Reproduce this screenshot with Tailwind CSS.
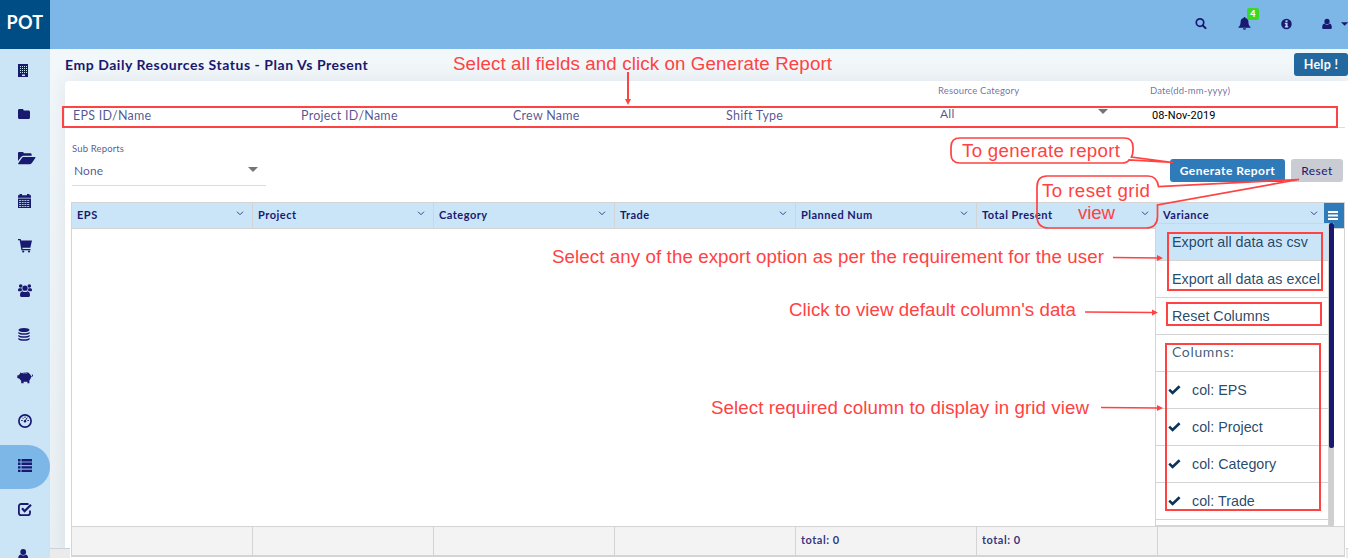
<!DOCTYPE html>
<html lang="en">
<head>
<meta charset="utf-8">
<title>Emp Daily Resources Status</title>
<script src="https://cdn.jsdelivr.net/npm/@tailwindcss/browser@4"></script>
</head>
<body class="w-[1348px] h-[558px] overflow-hidden relative font-['Lato',sans-serif] text-[#191970] bg-white">
<header class="h-[49px] flex bg-[#7cb7e8]">
  <div class="w-[50px] h-[49px] bg-[#004c84] text-white font-bold text-[18px] leading-[45px] text-center tracking-[0.3px]">POT</div>
  <div class="flex-1"></div>
  <div class="flex items-center w-[153px] h-[47px]">
    <svg class="w-[13px] h-[13px]" viewBox="0 0 13 13" fill="none" stroke="#191970"><circle cx="5.5" cy="5.5" r="4.1" stroke-width="1.9"/><path d="M8.6 8.6l3 3" stroke-width="2.3" stroke-linecap="round"/></svg>
    <div class="relative ml-[31px] w-[13px] h-[13px]">
      <svg class="w-[13px] h-[13px]" viewBox="0 0 13 13" fill="#191970"><path d="M6.5 0c.6 0 .9.4.9.9C9.400 1.300 10.400 2.800 10.400 4.700c0 3 .9 4.300 2.100 5.300v.8H.5V10C1.700 9 2.600 7.700 2.600 4.700c0-1.900 1-3.400 3-3.800 0-.5.300-.9.900-.9zM5 11.300h3a1.500 1.500 0 0 1-3 0z"/></svg>
      <span class="absolute -top-[9px] left-[9px] w-[12px] h-[12px] rounded-[2px] bg-[#39d925] text-white text-[9px] leading-[11px] font-black text-center">4</span>
    </div>
    <svg class="ml-[30px] w-[12px] h-[12px]" viewBox="0 0 12 12"><circle cx="6" cy="6" r="5.800" fill="#191970"/><path d="M5 2h2.200v1.700H5zM4.200 4.700h3v3.800h.8v1.300H4.200V8.500H5V6h-.8z" fill="#b5d5f0"/></svg>
    <svg class="ml-[30px] w-[11px] h-[12px]" viewBox="0 0 11 12" fill="#191970"><circle cx="5.500" cy="3.200" r="2.900"/><path d="M2.600 5.400C.8 5.800.2 7.800.2 9.800c0 1.200.7 1.800 1.700 1.800h7.200c1 0 1.700-.6 1.700-1.800 0-2-.6-4-2.400-4.400a4.100 4.100 0 0 1-5.800 0z"/></svg>
    <svg class="ml-[9px] w-[8px] h-[4px]" viewBox="0 0 8 4" fill="#191970"><path d="M0 0h8L4 4z"/></svg>
  </div>
</header>
<div class="flex h-[509px]">
  <nav class="w-[50px] bg-[#cbe5f7] overflow-hidden flex flex-col">
    <div class="h-[44px] shrink-0 flex items-center pl-[18px]"><svg class="w-[16px] h-[16px]" viewBox="0 0 16 16"><path fill="#191970" d="M0 1h10v13H0z"/><path d="M2 3.500h7M2 5.500h7M2 7.500h7M2 9.500h7" stroke="#cbe5f7" stroke-width="1" stroke-dasharray="1 1"/><path d="M4 11.500h3v1.500H4z" fill="#cbe5f7"/></svg></div>
    <div class="h-[44px] shrink-0 flex items-center pl-[18px]"><svg class="w-[16px] h-[16px]" viewBox="0 0 16 16" fill="#191970"><path d="M1.500 2h2.800c.8 0 1.400.6 1.400 1.500h4.800c.9 0 1.500.6 1.500 1.500v5.500c0 .9-.6 1.500-1.500 1.500h-9C.6 12 0 11.400 0 10.500v-7C0 2.600.6 2 1.500 2z"/></svg></div>
    <div class="h-[44px] shrink-0 flex items-center pl-[18px] pb-[1px]"><svg class="w-[18px] h-[16px]" viewBox="0 0 18 16" fill="#191970"><path d="M1.300 1h3.200c.8 0 1.300.6 1.300 1.300h6.400c1 0 1.500.6 1.500 1.500v1H6c-1.400 0-2.600.6-3.400 1.700L0 10V2.300C0 1.500.5 1 1.300 1z"/><path d="M5.600 6h11.200c.8 0 .9.500.5 1.100l-3.400 5c-.5.700-1.200 1.100-2 1.100H.7c-.6 0-.8-.4-.4-1l3.400-5C4.200 6.400 4.800 6 5.600 6z"/></svg></div>
    <div class="h-[44px] shrink-0 flex items-center pl-[18px] pb-[4px]"><svg class="w-[16px] h-[16px]" viewBox="0 0 16 16"><path fill="#191970" d="M0 2.200h1.500V1h2.500v1.200h5V1h2.500v1.200H13v2.500H0zM0 5.500h13V15H0z"/><path d="M1 7.500h11M1 9.500h11M1 11.500h11M1 13.500h11" stroke="#cbe5f7" stroke-dasharray="2 .7" stroke-width=".8"/></svg></div>
    <div class="h-[44px] shrink-0 flex items-center pl-[18px] pb-[3px]"><svg class="w-[16px] h-[16px]" viewBox="0 0 16 16" fill="#191970"><path d="M0 1h2.600l.5 1.600H14L12.300 9.800H4.300l.2 1.200h8v1.200H3.400L1.700 2.200H0z"/><circle cx="5.200" cy="13.500" r="1.100"/><circle cx="11" cy="13.500" r="1.100"/></svg></div>
    <div class="h-[44px] shrink-0 flex items-center pl-[18px]"><svg class="w-[16px] h-[16px]" viewBox="0 0 16 16" fill="#191970"><circle cx="2.700" cy="3" r="1.800"/><circle cx="11.300" cy="3" r="1.800"/><circle cx="7" cy="5.200" r="2.600"/><path d="M1.300 5.200h2.200c.1 1 .5 1.700 1 2.200-.9.100-1.500.4-2 .9H1.200C.4 8.300 0 7.800 0 7.200c0-1 .3-2 1.300-2zM12.700 5.200h-2.200c-.1 1-.5 1.700-1 2.200.9.100 1.500.4 2 .9h1.300c.8 0 1.200-.5 1.200-1.100 0-1-.3-2-1.300-2zM4.500 8.200c1.600 1.200 3.400 1.200 5 0 1.800.1 2.500 2 2.500 4 0 1.200-.7 1.800-1.700 1.800H3.700c-1 0-1.700-.6-1.700-1.800 0-2 .7-3.900 2.500-4z"/></svg></div>
    <div class="h-[44px] shrink-0 flex items-center pl-[18px]"><svg class="w-[16px] h-[16px]" viewBox="0 0 16 16" fill="#191970"><ellipse cx="6" cy="3" rx="5.500" ry="2"/><path d="M.3 4.900c2.400 1.700 9 1.700 11.400 0v1.300c-1.400 2-10 2-11.400 0zM.3 7.900c2.400 1.700 9 1.700 11.400 0v1.300c-1.400 2-10 2-11.400 0zM.3 10.900c2.400 1.700 9 1.700 11.400 0v1.300c-1.400 2-10 2-11.400 0z"/></svg></div>
    <div class="h-[44px] shrink-0 flex items-center pl-[17px] pb-[3px]"><svg class="w-[17px] h-[16px]" viewBox="0 0 17 16"><path fill="#191970" d="M3 2.500l2 .7c2-1.200 5.500-1.200 7.300.2 1.200 1 1.700 2 1.800 3 .6.100 1-.2 1-.7-.6-.5-.2-1.400.5-1.200.5.300.5 1.400-.1 2-.4.600-.8.800-1.500.8-.2 1.300-.8 2.200-1.600 3v3H10.400v-1.500H6.600v1.500H4.200v-2.500C3.400 10.300 2.800 9.600 2.500 8.800L.3 8V5.500L2 5c.3-.5.600-.9 1.100-1.300z"/><path d="M6 3.200c1.200-.5 2.700-.5 4 0" stroke="#cbe5f7" stroke-width=".7" fill="none"/></svg></div>
    <div class="h-[44px] shrink-0 flex items-center pl-[18px] pb-[4px]"><svg class="w-[16px] h-[16px]" viewBox="0 0 16 16"><circle cx="7" cy="8" r="6.100" fill="none" stroke="#191970" stroke-width="1.700"/><path d="M3.200 7.500h1.500M9.400 7.500h1.500M4.300 4.700l1 1M7 3.500v1.500" stroke="#191970"/><path d="M7 8.200l2.200-3.500" stroke="#191970" stroke-width="1"/><circle cx="7" cy="8.200" r="1.200" fill="#191970"/></svg></div>
    <div class="h-[44px] shrink-0 flex items-center pl-[18px] pb-[2px] bg-[#7cb7e8] rounded-r-full"><svg class="w-[16px] h-[16px]" viewBox="0 0 16 16" fill="#191970"><path d="M0 1h2.500v2.500H0zM3.500 1H14v2.500H3.500zM0 4.600h2.500V7H0zM3.500 4.600H14V7H3.500zM0 8.200h2.500v2.400H0zM3.500 8.200H14v2.400H3.500zM0 11.700h2.500V14H0zM3.500 11.700H14V14H3.500z"/></svg></div>
    <div class="h-[44px] shrink-0 flex items-center pl-[18px] pb-[2px]"><svg class="w-[16px] h-[16px]" viewBox="0 0 16 16" fill="none" stroke="#191970"><path d="M10.500 2H3.200C1.800 2 .9 2.900.9 4.200v6.700c0 1.300.9 2.200 2.300 2.200h6.500c1.400 0 2.300-.9 2.300-2.200V8.500" stroke-width="1.800"/><path d="M4 6.300l2.600 2.800L13 2.700" stroke-width="2.200"/></svg></div>
    <div class="h-[44px] shrink-0 flex items-center pl-[18px]"><svg class="w-[11px] h-[12px]" viewBox="0 0 11 12" fill="#191970"><circle cx="5.200" cy="3" r="2.900"/><path d="M2.600 5.400C.8 5.800.2 7.800.2 9.800c0 1.200.7 1.800 1.700 1.800h6.600c1 0 1.700-.6 1.700-1.800 0-2-.6-4-2.400-4.400a4.100 4.100 0 0 1-5.200 0z"/></svg></div>
  </nav>
  <main class="flex-1 min-w-0 flex flex-col bg-gradient-to-b from-[#f2f7fa] to-[#eaf0f4]">
    <div class="h-[32px] shrink-0 flex items-center justify-between pl-[15px]">
      <h1 class="font-bold text-[14px] tracking-[0.540px] pb-[2px]">Emp Daily Resources Status - Plan Vs Present</h1>
      <button class="w-[54px] h-[23px] rounded-[3px] bg-[#2369a0] text-white font-bold text-[12.500px] tracking-[0.3px] leading-[21px] mb-[1px]">Help !</button>
    </div>
    <section class="ml-[15px] h-[477px] rounded-tl-[4px] bg-white shadow-[0_0_20px_rgba(60,80,90,0.10)] pl-[6px] pr-[3px] flex flex-col">
      <div class="h-[47px] shrink-0 flex text-[12.500px] leading-[19px] tracking-[0.25px] text-[#191970]/75">
        <div class="w-[228px] border-b border-[#ddd] pt-[25px] pl-[2px]">EPS ID/Name</div>
        <div class="w-[212px] border-b border-[#ddd] pt-[25px] pl-[2px]">Project ID/Name</div>
        <div class="w-[213px] border-b border-[#ddd] pt-[25px] pl-[2px]">Crew Name</div>
        <div class="w-[213px] border-b border-[#ddd] pt-[25px] pl-[2px]">Shift Type</div>
        <div class="w-[213px] border-b border-[#ddd] pl-[1px] flex flex-col">
          <span class="text-[9.500px] leading-[12px] tracking-[0.150px] mt-[4px] text-[#191970]/65">Resource Category</span>
          <div class="flex justify-between items-center pl-[2px] pr-[42px] mt-[7px]"><span class="text-[12px] leading-[19px]">All</span><svg class="w-[10px] h-[5px] mb-[4px]" viewBox="0 0 10 5"><path d="M0 0h10L5 5z" fill="#757575"/></svg></div>
        </div>
        <div class="flex-1 border-b border-[#ddd] flex flex-col">
          <span class="text-[9.500px] leading-[12px] tracking-[0.150px] mt-[4px] text-[#191970]/65">Date(dd-mm-yyyy)</span>
          <span class="font-['Roboto',sans-serif] text-[11px] tracking-[0.1px] leading-[14px] text-black pl-[2px] mt-[12px]">08-Nov-2019</span>
        </div>
      </div>
      <div class="h-[74px] shrink-0 flex justify-between">
        <div class="w-[194px] h-[58px] border-b border-[#ddd] ml-[1px] pt-[15px] text-[#191970]/75">
          <div class="text-[9.500px] leading-[12px] tracking-[0.150px] text-[#191970]/75">Sub Reports</div>
          <div class="flex justify-between items-center pl-[2px] pr-[8px] mt-[7px]"><span class="text-[12px] leading-[18px] tracking-[0.1px]">None</span><svg class="w-[10px] h-[5px] mb-[4px]" viewBox="0 0 10 5"><path d="M0 0h10L5 5z" fill="#757575"/></svg></div>
        </div>
        <div class="flex gap-[6px] pt-[31px] pr-[2px] text-[12px] tracking-[0.450px]">
          <button class="w-[115px] h-[23px] rounded-[3px] bg-[#2f7ab8] text-white font-bold">Generate Report</button>
          <button class="w-[52px] h-[23px] rounded-[3px] bg-[#c9cdd3]">Reset</button>
        </div>
      </div>
      <div class="h-[355px] shrink-0 relative border border-b-2 border-[#d4d4d4] flex flex-col bg-white">
        <div class="h-[26px] shrink-0 flex bg-[#cbe5f8] border-b border-[#d4d4d4] font-bold text-[11px] leading-[24px] tracking-[0.5px]">
          <div class="w-[181px] border-r border-[#d4d4d4] pl-[5px] pr-[8px] flex justify-between"><span>EPS</span><svg class="w-[8px] h-[5px] mt-[8px]" viewBox="0 0 8 5" fill="none" stroke="#3d3d8f"><path d="M1 .7l3 3 3-3"/></svg></div>
          <div class="w-[181px] border-r border-[#d4d4d4] pl-[5px] pr-[8px] flex justify-between"><span>Project</span><svg class="w-[8px] h-[5px] mt-[8px]" viewBox="0 0 8 5" fill="none" stroke="#3d3d8f"><path d="M1 .7l3 3 3-3"/></svg></div>
          <div class="w-[181px] border-r border-[#d4d4d4] pl-[5px] pr-[8px] flex justify-between"><span>Category</span><svg class="w-[8px] h-[5px] mt-[8px]" viewBox="0 0 8 5" fill="none" stroke="#3d3d8f"><path d="M1 .7l3 3 3-3"/></svg></div>
          <div class="w-[181px] border-r border-[#d4d4d4] pl-[5px] pr-[8px] flex justify-between"><span>Trade</span><svg class="w-[8px] h-[5px] mt-[8px]" viewBox="0 0 8 5" fill="none" stroke="#3d3d8f"><path d="M1 .7l3 3 3-3"/></svg></div>
          <div class="w-[181px] border-r border-[#d4d4d4] pl-[5px] pr-[8px] flex justify-between"><span>Planned Num</span><svg class="w-[8px] h-[5px] mt-[8px]" viewBox="0 0 8 5" fill="none" stroke="#3d3d8f"><path d="M1 .7l3 3 3-3"/></svg></div>
          <div class="w-[181px] border-r border-[#d4d4d4] pl-[5px] pr-[8px] flex justify-between"><span>Total Present</span><svg class="w-[8px] h-[5px] mt-[8px]" viewBox="0 0 8 5" fill="none" stroke="#3d3d8f"><path d="M1 .7l3 3 3-3"/></svg></div>
          <div class="w-[166px] pl-[5px] pr-[6px] flex justify-between"><span>Variance</span><svg class="w-[8px] h-[5px] mt-[8px]" viewBox="0 0 8 5" fill="none" stroke="#3d3d8f"><path d="M1 .7l3 3 3-3"/></svg></div>
          <div class="flex-1 bg-[#2f7ab8] flex items-center justify-center pr-[2px]"><svg class="w-[10px] h-[9px]" viewBox="0 0 10 9" fill="#fff"><path d="M0 0h10v2H0zM0 3.500h10v2H0zM0 7h10v2H0z"/></svg></div>
        </div>
        <div class="flex-1"></div>
        <div class="h-[29px] shrink-0 flex bg-[#f3f3f3] border-t border-[#d4d4d4] font-bold text-[11px] leading-[25px] tracking-[0.5px] text-[#191970]/90">
          <div class="w-[181px] border-r border-[#d4d4d4]"></div>
          <div class="w-[181px] border-r border-[#d4d4d4]"></div>
          <div class="w-[181px] border-r border-[#d4d4d4]"></div>
          <div class="w-[181px] border-r border-[#d4d4d4]"></div>
          <div class="w-[181px] border-r border-[#d4d4d4] pl-[5px]">total: 0</div>
          <div class="w-[181px] border-r border-[#d4d4d4] pl-[5px]">total: 0</div>
        </div>
        <div class="absolute right-[10px] top-[20px] w-[179px] h-[304px] flex overflow-hidden">
          <div class="w-[174px] border border-b-2 border-[#d4d4d4] bg-white overflow-hidden font-['Liberation_Sans',sans-serif] text-[14.300px] text-[#0b3558]/90">
            <div class="h-[37px] border-b border-[#d4d4d4] pl-[16px] leading-[36px] whitespace-nowrap bg-[#cbe5f8]">Export all data as csv</div>
            <div class="h-[37px] border-b border-[#d4d4d4] pl-[16px] leading-[36px] whitespace-nowrap">Export all data as excel</div>
            <div class="h-[37px] border-b border-[#d4d4d4] pl-[16px] leading-[36px]">Reset Columns</div>
            <div class="h-[37px] border-b border-[#d4d4d4] pl-[16px] leading-[34px] font-['Lato',sans-serif] text-[14px] tracking-[0.650px] text-[#0b3558]/80">Columns:</div>
            <div class="h-[37px] border-b border-[#d4d4d4] pl-[12px] leading-[36px] flex items-center gap-[11px]"><svg class="w-[13px] h-[10px]" viewBox="0 0 13 10" fill="none" stroke="#0b3558" stroke-width="2.600"><path d="M1.200 4.600l3.400 3.300L11.600 1.200"/></svg>col: EPS</div>
            <div class="h-[37px] border-b border-[#d4d4d4] pl-[12px] leading-[36px] flex items-center gap-[11px]"><svg class="w-[13px] h-[10px]" viewBox="0 0 13 10" fill="none" stroke="#0b3558" stroke-width="2.600"><path d="M1.200 4.600l3.400 3.300L11.600 1.200"/></svg>col: Project</div>
            <div class="h-[37px] border-b border-[#d4d4d4] pl-[12px] leading-[36px] flex items-center gap-[11px]"><svg class="w-[13px] h-[10px]" viewBox="0 0 13 10" fill="none" stroke="#0b3558" stroke-width="2.600"><path d="M1.200 4.600l3.400 3.300L11.600 1.200"/></svg>col: Category</div>
            <div class="h-[37px] border-b border-[#d4d4d4] pl-[12px] leading-[36px] flex items-center gap-[11px]"><svg class="w-[13px] h-[10px]" viewBox="0 0 13 10" fill="none" stroke="#0b3558" stroke-width="2.600"><path d="M1.200 4.600l3.400 3.300L11.600 1.200"/></svg>col: Trade</div>
          </div>
          <div class="w-[5px] bg-[#cfcfcf] rounded-b-[3px]"><div class="h-[225px] bg-[#191970] rounded-[2px]"></div></div>
        </div>
      </div>
    </section>
  </main>
</div>
<div class="absolute left-[50px] top-[548px] w-[20px] h-[10px] bg-[#ebebeb] border-t border-[#ccd2dc]"></div>
<div class="absolute left-[1346px] top-[548px] w-[2px] h-[10px] bg-[#ebebeb] border-t border-[#ccd2dc]"></div>
<svg class="absolute left-0 top-0 w-[1348px] h-[558px]" viewBox="0 0 1348 558" fill="none" stroke="#ff4242" stroke-width="2">
  <rect x="63" y="107" width="1274" height="20"/>
  <rect x="1168" y="233" width="154" height="57"/>
  <rect x="1167" y="303" width="154" height="22"/>
  <rect x="1166" y="344" width="154" height="166"/>
  <path d="M628 72v29" /><path d="M625 99h6l-3 6z" fill="#ff4242" stroke="none"/>
  <path d="M1113 257.500L1158 258M1085 312L1153 312.500M1101 407.500L1158 408" stroke-width="1.500"/>
  <path d="M1157 255l6 3-6 3zM1152 309.500l6 3-6 3zM1157 405l6 3-6 3z" fill="#ff4242" stroke="none"/>
  <path d="M960 138H1124Q1133 138 1133 147V150Q1133 154 1131.500 157L1173 162.500L1129 160Q1127 163 1122 163H960Q951 163 951 154V147Q951 138 960 138Z" stroke-width="1.700"/>
  <path d="M1047 176H1148Q1157 176 1158.500 186.500L1299 179.500L1157.500 205V217Q1157 228 1146 228H1049Q1037 228 1037 216V187Q1037 176 1047 176Z" stroke-width="1.700"/>
  <g fill="#ff4242" stroke="none" font-family="Liberation Sans, sans-serif" font-size="18.700">
    <text x="453" y="70" textLength="379">Select all fields and click on Generate Report</text>
    <text x="962" y="157" textLength="158">To generate report</text>
    <text x="1042" y="197" textLength="108">To reset grid</text>
    <text x="1078" y="219" textLength="37">view</text>
    <text x="552" y="263" textLength="552">Select any of the export option as per the requirement for the user</text>
    <text x="789" y="316" textLength="287">Click to view default column's data</text>
    <text x="711" y="414" textLength="378">Select required column to display in grid view</text>
  </g>
</svg>
</body>
</html>
